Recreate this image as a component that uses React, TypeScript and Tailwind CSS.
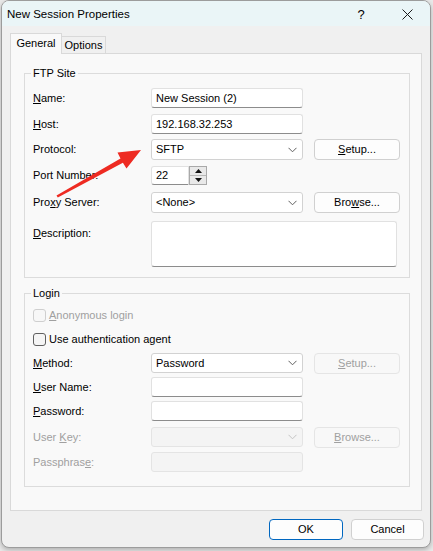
import React from "react";

const F = "font-['Liberation_Sans',Arial,sans-serif]";

function Chevron({ disabled }: { disabled?: boolean }) {
  return (
    <svg width="9" height="6" viewBox="0 0 9 6" className="shrink-0">
      <path d="M0.5 0.8 L4.5 4.8 L8.5 0.8" fill="none" stroke={disabled ? "#c4c4c4" : "#5f5f5f"} strokeWidth="1" />
    </svg>
  );
}

function Label({ children, disabled, className = "" }: { children: React.ReactNode; disabled?: boolean; className?: string }) {
  return (
    <div className={`w-[118px] shrink-0 text-[11px] leading-[13px] ${disabled ? "text-[#a0a0a0]" : "text-black"} ${className}`}>
      {children}
    </div>
  );
}

function Input({ value, className = "" }: { value?: string; className?: string }) {
  return (
    <div className={`h-full flex items-center bg-white border border-[#e1e1e1] border-b-[#8c8c8c] rounded-[3px] pl-[4px] text-[11px] text-black ${className}`}>
      {value}
    </div>
  );
}

function Combo({ value, disabled }: { value?: string; disabled?: boolean }) {
  return (
    <div
      className={`w-[152px] h-full flex items-center justify-between rounded-[3px] pl-[4px] pr-[5px] text-[11px] ${
        disabled ? "bg-[#f4f4f4] border border-[#e4e4e4]" : "bg-white border border-[#d2d2d2] text-black"
      }`}
    >
      <span>{value}</span>
      <Chevron disabled={disabled} />
    </div>
  );
}

function Btn({ children, disabled }: { children: React.ReactNode; disabled?: boolean }) {
  return (
    <div
      className={`ml-[11px] w-[86px] h-[21px] flex items-center justify-center rounded-[4px] text-[11px] ${
        disabled ? "bg-[#f8f8f8] border border-[#e5e5e5] text-[#a0a0a0]" : "bg-[#fdfdfd] border border-[#d0d0d0] text-black"
      }`}
    >
      {children}
    </div>
  );
}

function Check({ disabled, children }: { disabled?: boolean; children: React.ReactNode }) {
  return (
    <div className="flex items-center h-[14px]">
      <div
        className={`w-[13px] h-[13px] rounded-[3px] border ${
          disabled ? "border-[#cfcfcf] bg-[#f7f7f7]" : "border-[#606060] bg-[#f5f5f5]"
        }`}
      />
      <span className={`ml-[3px] text-[11px] leading-[13px] ${disabled ? "text-[#a0a0a0]" : "text-black"}`}>{children}</span>
    </div>
  );
}

function Spinner() {
  return (
    <div className="w-[18px] h-full flex flex-col border border-[#a9a9a9] bg-[#e9e9e9]">
      <div className="flex-1 flex items-center justify-center border-b border-[#b8b8b8]">
        <svg width="7" height="4" viewBox="0 0 7 4">
          <path d="M0 4 L3.5 0 L7 4 Z" fill="#111" />
        </svg>
      </div>
      <div className="flex-1 flex items-center justify-center">
        <svg width="7" height="4" viewBox="0 0 7 4">
          <path d="M0 0 L3.5 4 L7 0 Z" fill="#111" />
        </svg>
      </div>
    </div>
  );
}

export default function App() {
  return (
    <div className={`relative w-[433px] h-[551px] bg-[#e9e9e9] ${F}`}>
      <div className="ml-[1px] w-[430px] h-[548px] flex flex-col rounded-[8px] border border-[#9c9c9c] bg-[#f0f0f0] overflow-hidden shadow-[0_2px_5px_rgba(0,0,0,0.25)]">
        {/* title bar */}
        <div className="h-[25px] shrink-0 flex items-center bg-[#eaf5f7]">
          <div className="flex-1 pl-[5px] pt-[2px] text-[11.5px] text-black">New Session Properties</div>
          <div className="w-[46px] h-full flex items-center justify-center text-[13px] text-black pt-[2px]">?</div>
          <div className="w-[46px] h-full flex items-center justify-center pt-[2px]">
            <svg width="11" height="11" viewBox="0 0 11 11">
              <path d="M0.5 0.5 L10.5 10.5 M10.5 0.5 L0.5 10.5" stroke="#1a1a1a" strokeWidth="1" />
            </svg>
          </div>
        </div>

        {/* tabs */}
        <div className="mt-[7px] ml-[8px] flex items-end">
          <div className="relative z-10 -mb-px w-[52px] h-[21px] flex items-center justify-center border border-b-0 border-[#d9d9d9] bg-[#f9f9f9] text-[11px] text-black pb-[1px]">
            General
          </div>
          <div className="w-[44px] h-[17px] flex items-center justify-center border border-l-0 border-b-0 border-[#d9d9d9] bg-[#f0f0f0] text-[11px] text-black">
            Options
          </div>
        </div>

        {/* panel */}
        <div className="mx-[8px] h-[458px] border border-[#d9d9d9] bg-[#f9f9f9]">
          {/* FTP Site */}
          <fieldset className="mt-[13px] ml-[13px] w-[386px] border border-[#dcdcdc] pl-[8px] pb-[10px]">
            <legend className="-ml-[2px] px-[2px] text-[11px] leading-[13px] text-black">FTP Site</legend>
            <div className="mt-[8px] flex items-center h-[20px]">
              <Label>
                <u>N</u>ame:
              </Label>
              <Input value="New Session (2)" className="w-[152px]" />
            </div>
            <div className="mt-[6px] flex items-center h-[20px]">
              <Label>
                <u>H</u>ost:
              </Label>
              <Input value="192.168.32.253" className="w-[152px]" />
            </div>
            <div className="mt-[5px] flex items-center h-[21px]">
              <Label>Protocol:</Label>
              <Combo value="SFTP" />
              <Btn>
                <u>S</u>etup...
              </Btn>
            </div>
            <div className="mt-[6px] flex items-center h-[19px]">
              <Label>Port Number:</Label>
              <Input value="22" className="w-[38px] rounded-r-none" />
              <Spinner />
            </div>
            <div className="mt-[7px] flex items-center h-[21px]">
              <Label>
                Pro<u>x</u>y Server:
              </Label>
              <Combo value="<None>" />
              <Btn>
                Bro<u>w</u>se...
              </Btn>
            </div>
            <div className="mt-[8px] flex items-start h-[46px]">
              <Label className="mt-[6px]">
                <u>D</u>escription:
              </Label>
              <Input className="w-[246px] h-[46px]" />
            </div>
          </fieldset>

          {/* Login */}
          <fieldset className="mt-[9px] ml-[13px] w-[386px] border border-[#dcdcdc] pl-[8px] pb-[14px]">
            <legend className="-ml-[2px] px-[2px] text-[11px] leading-[13px] text-black">Login</legend>
            <div className="mt-[8px]">
              <Check disabled>
                <u>A</u>nonymous login
              </Check>
            </div>
            <div className="mt-[10px]">
              <Check>
                Use authentication a<u>g</u>ent
              </Check>
            </div>
            <div className="mt-[7px] flex items-center h-[20px]">
              <Label>
                <u>M</u>ethod:
              </Label>
              <Combo value="Password" />
              <Btn disabled>
                <u>S</u>etup...
              </Btn>
            </div>
            <div className="mt-[4px] flex items-center h-[20px]">
              <Label>
                <u>U</u>ser Name:
              </Label>
              <Input className="w-[152px]" />
            </div>
            <div className="mt-[4px] flex items-center h-[20px]">
              <Label>
                <u>P</u>assword:
              </Label>
              <Input className="w-[152px]" />
            </div>
            <div className="mt-[6px] flex items-center h-[20px]">
              <Label disabled>
                User <u>K</u>ey:
              </Label>
              <Combo disabled />
              <Btn disabled>
                <u>B</u>rowse...
              </Btn>
            </div>
            <div className="mt-[5px] flex items-center h-[20px]">
              <Label disabled>
                Passphras<u>e</u>:
              </Label>
              <div className="w-[152px] h-full rounded-[3px] border border-[#e4e4e4] bg-[#f4f4f4]" />
            </div>
          </fieldset>
        </div>

        {/* buttons */}
        <div className="mt-[8px] mr-[6px] flex justify-end gap-[8px]">
          <div className="w-[74px] h-[21px] flex items-center justify-center rounded-[4px] border border-[#0067c0] bg-[#fdfdfd] text-[11px] text-black">
            OK
          </div>
          <div className="w-[73px] h-[21px] flex items-center justify-center rounded-[4px] border border-[#d0d0d0] bg-[#fdfdfd] text-[11px] text-black">
            Cancel
          </div>
        </div>
      </div>

      {/* red annotation arrow */}
      <svg className="absolute left-0 top-0 pointer-events-none" width="433" height="551" viewBox="0 0 433 551">
        <polygon
          points="141,150 117.5,152.5 120.5,158.4 56.5,195.5 57.8,197.6 122.9,162.8 126.5,168.5"
          fill="#ee2b22"
        />
      </svg>
    </div>
  );
}
